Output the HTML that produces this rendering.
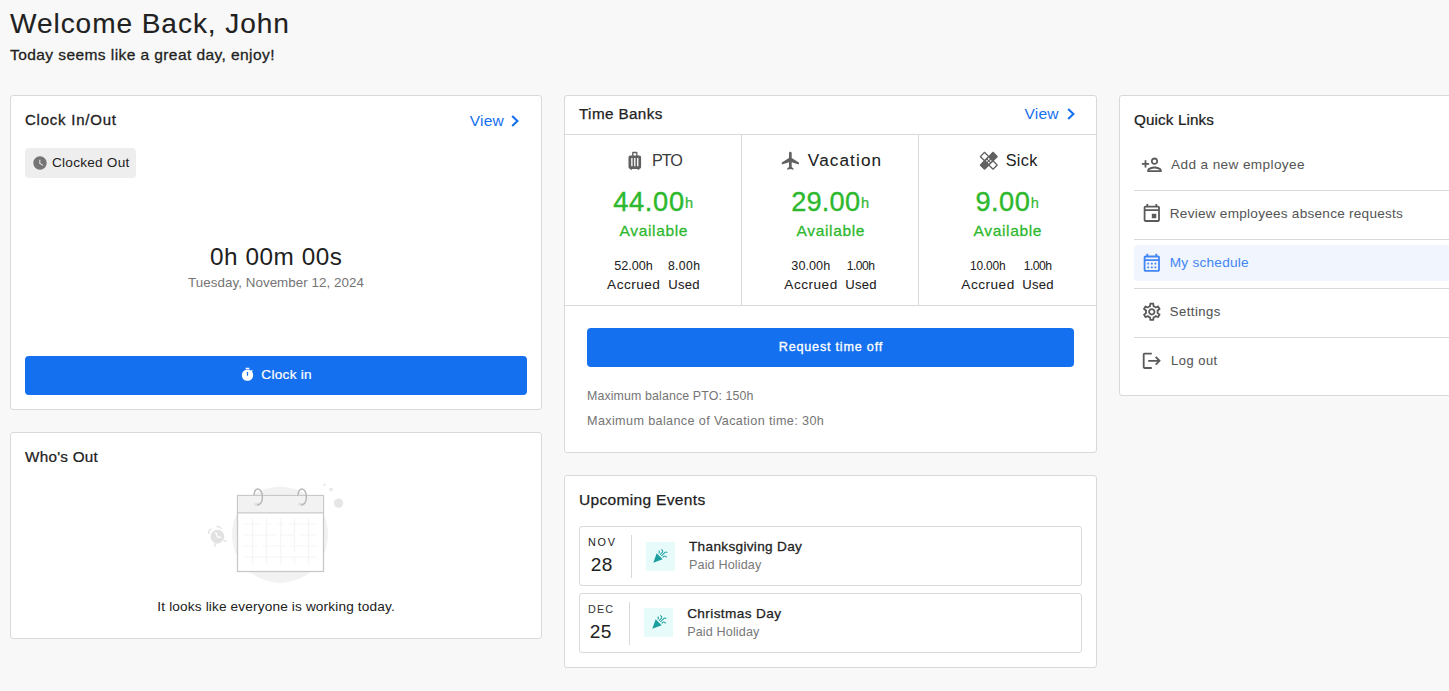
<!DOCTYPE html>
<html lang="en">
<head>
<meta charset="utf-8">
<title>Dashboard</title>
<style>
*{box-sizing:border-box;margin:0;padding:0}
html,body{width:1449px;height:691px;overflow:hidden;background:#f8f8f8}
body{font-family:"Liberation Sans",sans-serif;color:#212121;position:relative;font-size:12.6px}
.t{white-space:nowrap;display:inline-block}
.abs{position:absolute}
.cx{position:absolute;left:0;right:0;text-align:center}
h1{position:absolute;left:10px;top:4px;font-size:27px;font-weight:400;line-height:40px}
.sub{position:absolute;left:10px;top:44px;font-size:14.4px;font-weight:400;line-height:22px}
.card{position:absolute;background:#fff;border:1px solid #d9d9d9;border-radius:3px}
.ct{position:absolute;font-size:14.4px;font-weight:400;line-height:22px}
.view{position:absolute;color:#1570ef;font-size:14.4px;line-height:22px;display:flex;align-items:center}
.view svg{width:10px;height:14px;fill:none;stroke:#1570ef;stroke-width:2.1;margin-left:7px;overflow:visible}
.btn{position:absolute;background:#1570ef;border-radius:4px;color:#fff;font-weight:400;font-size:12.6px;display:flex;align-items:center;justify-content:center;padding-bottom:2px}
#c1{left:10px;top:95px;width:532px;height:315px}
#c2{left:10px;top:432px;width:532px;height:207px}
#c3{left:564px;top:95px;width:533px;height:358px}
#c4{left:564px;top:475px;width:533px;height:193px}
#c5{left:1119px;top:95px;width:533px;height:301px}
.g{color:#757575}
.hl{position:absolute;left:0;right:0;height:1px;background:#d9d9d9}
.vl{position:absolute;width:1px;background:#d9d9d9}
.tb{position:absolute;top:39px;height:170px;width:177px}
.tb .nm{position:absolute;left:0;right:0;top:14px;display:flex;justify-content:center;align-items:center;font-size:16.2px;line-height:24px}
.tb .nm svg{width:21.6px;height:21.6px;fill:#616161;margin-right:6.4px}
.tb .val{position:absolute;left:0;right:0;top:49px;text-align:center;color:#2eb82e;font-size:25.2px;font-weight:400;line-height:38px}
.tb .val small{font-size:13.5px;transform:translateY(-3.4px);margin-left:1px}
.tb .val{white-space:nowrap}
.tb .av{position:absolute;left:0;right:0;top:85px;text-align:center;color:#2eb82e;font-size:14.4px;font-weight:400;line-height:22px}
.tb .au{position:absolute;left:0;right:0;top:122px;display:flex;justify-content:center;font-size:12.6px;line-height:18.5px;text-align:center}
.tb .au div+div{margin-left:8px}
.tb .au .n{font-size:11.7px}
.ev{position:absolute;left:14px;width:503px;height:60px;border:1px solid #d9d9d9;border-radius:3px;display:flex;align-items:center;padding-left:8px}
.ev .d{text-align:center}
.ev .m{font-size:10.8px;letter-spacing:1.8px;line-height:16px;margin-right:-1.8px}
.ev .n{font-size:18px;line-height:27px}
.ev .sep{width:1px;height:43px;background:#d9d9d9;margin:0 14px 0 16px}
.ev .ic{width:29px;height:29px;position:relative;top:0;background:#e8fbfb;display:flex;align-items:center;justify-content:center;margin-right:14px}
.ev .ic svg{width:16px;height:16px;fill:#1a9e9e}
.ev .tt{font-size:12.6px;font-weight:400;line-height:18px}
.ev .st{font-size:11.7px;line-height:18px;color:#757575}
.ql{position:absolute;left:14px;right:0;height:36px;display:flex;align-items:center;padding-left:7px;color:#555;font-size:12.6px}
.ql svg{width:21.6px;height:21.6px;fill:#5a5a5a;margin-right:7.2px}
.ql.on{background:#f0f5fe;color:#4285f4;border-radius:4px 0 0 4px}
.ql.on svg{fill:#4285f4}
</style>
</head>
<body>
<h1><span class="t" style="font-size:28.08px;letter-spacing:0.926px;margin-right:-0.926px;-webkit-text-stroke:0.11px">Welcome Back, John</span></h1>
<div class="sub"><span class="t" style="font-size:15.55px;letter-spacing:0.405px;margin-right:-0.405px;-webkit-text-stroke:0.28px">Today seems like a great day, enjoy!</span></div>

<div class="card" id="c1">
  <div class="ct" style="left:14px;top:13px"><span class="t" style="font-size:14.98px;letter-spacing:0.783px;margin-right:-0.783px;-webkit-text-stroke:0.30px">Clock In/Out</span></div>
  <div class="view" style="right:21px;top:14px"><span class="t" style="font-size:15.55px;letter-spacing:0.193px;margin-right:-0.193px">View</span><svg viewBox="0 0 10 14" style="margin-left:6.200px"><path d="M2.200 2l5.200 5-5.200 5"/></svg></div>
  <div class="abs" style="left:14px;top:52px;height:30px;width:111px;background:#eeeeee;border-radius:4px;display:flex;align-items:center;padding-left:7px;padding-bottom:1px;font-size:12.6px">
    <svg viewBox="0 0 24 24" style="width:16px;height:16px;fill:#757575;margin-right:4px"><path d="M12 2C6.500 2 2 6.500 2 12s4.500 10 10 10 10-4.500 10-10S17.500 2 12 2zm4.200 14.200L11 13V7h1.500v5.200l4.500 2.700-.8 1.300z"/></svg><span class="t" style="font-size:13.61px;letter-spacing:0.236px;margin-right:-0.236px;position:relative;top:-0.50px">Clocked Out</span>
  </div>
  <div class="cx" style="top:144px;font-size:22.5px;line-height:34px"><span class="t" style="font-size:24.30px;letter-spacing:0.559px;margin-right:-0.559px">0h 00m 00s</span></div>
  <div class="cx g" style="top:177px;font-size:12.6px;line-height:19px"><span class="t" style="font-size:13.36px;letter-spacing:0.052px;margin-right:-0.052px;-webkit-text-stroke:0.02px">Tuesday, November 12, 2024</span></div>
  <div class="btn" style="left:14px;top:260px;width:502px;height:39px">
    <svg viewBox="0 0 24 24" style="width:15px;height:15px;fill:#fff;margin-right:6px"><path d="M15 1H9v2h6V1zm4.030 6.390l1.420-1.420c-.43-.51-.9-.99-1.410-1.410l-1.420 1.420C16.070 4.740 14.120 4 12 4c-4.970 0-9 4.030-9 9s4.020 9 9 9 9-4.030 9-9c0-2.120-.74-4.070-1.970-5.610zM13 14h-2V8h2v6z"/></svg><span class="t" style="font-size:13.61px;letter-spacing:0.286px;margin-right:-0.286px;position:relative;top:-0.50px;-webkit-text-stroke:0.21px">Clock in</span>
  </div>
</div>

<div class="card" id="c2">
  <div class="ct" style="left:14px;top:13px"><span class="t" style="font-size:15.26px;letter-spacing:0.258px;margin-right:-0.258px;-webkit-text-stroke:0.24px">Who's Out</span></div>
<svg class="abs" style="left:193px;top:49px" width="144" height="104" viewBox="204 482 144 104">
    <circle cx="280" cy="534.7" r="48" fill="#f2f2f2"/>
    <circle cx="338.600" cy="503.100" r="4.700" fill="#e6e6e6"/>
    <circle cx="331" cy="489.600" r="2" fill="#e9e9e9"/>
    <circle cx="324.500" cy="484.900" r="1.300" fill="#ececec"/>
    <g transform="rotate(-22 217.300 536.400) translate(217.300 536.400) scale(1.1) translate(-217.300 -536.400)" fill="#e2e2e2">
      <circle cx="217.300" cy="536.600" r="6.200"/>
      <path d="M210.500 531.300a4.600 4.600 0 0 1 4.200-3.900l.3 1.200a3.600 3.600 0 0 0-3.400 3.200zM224.100 531.300a4.600 4.600 0 0 0-4.200-3.900l-.3 1.200a3.600 3.600 0 0 1 3.400 3.200zM212.600 541.300l-1.700 2.600 1 .6 1.800-2.500zM222 541.300l1.700 2.600-1 .6-1.800-2.500z"/>
      <path d="M217.300 532.800v4.200l2.600 1.400" stroke="#fff" stroke-width="1.200" fill="none" stroke-linecap="round"/>
    </g>
    <rect x="237.500" y="495.500" width="86" height="76" fill="#fff" stroke="#c8c8c8" stroke-width="1.300"/>
    <rect x="238" y="496" width="85" height="16.500" fill="#f2f2f2"/>
    <path d="M237.500 512.800h86" stroke="#c8c8c8" stroke-width="1.300"/>
    <g stroke="#f5f5f5" stroke-width="1.200">
      <path d="M244 524h17M266 524h6M277 524h7M288 524h29M244 535h32M281 535h14M300 535h17M244 546h13M262 546h23M290 546h27M244 557h73"/>
      <path d="M252.500 518v46M266.500 518v46M280.700 518v46M294.500 518v34M294.500 556v8M308.500 518v46"/>
    </g>
    <ellipse cx="256.500" cy="504.300" rx="2.600" ry="1.600" fill="#e0e0e0"/>
    <ellipse cx="300.500" cy="504.300" rx="2.600" ry="1.600" fill="#e0e0e0"/>
    <path d="M254 494.500c.5-3.500 2.200-5.500 4-5.500 2.500 0 4.400 3.400 4.400 8.300 0 4-1.800 7-4.600 7.600" fill="none" stroke="#b8b8b8" stroke-width="1.500" stroke-linecap="round"/>
    <path d="M298 494.500c.5-3.500 2.200-5.500 4-5.500 2.500 0 4.400 3.400 4.400 8.300 0 4-1.800 7-4.600 7.600" fill="none" stroke="#b8b8b8" stroke-width="1.500" stroke-linecap="round"/>
  </svg>
  <div class="cx" style="top:164px;font-size:12.6px;line-height:19px"><span class="t" style="font-size:13.61px;letter-spacing:0.157px;margin-right:-0.157px">It looks like everyone is working today.</span></div>
</div>

<div class="card" id="c3">
  <div class="ct" style="left:14px;top:7px"><span class="t" style="font-size:15.26px;letter-spacing:0.373px;margin-right:-0.373px;-webkit-text-stroke:0.25px">Time Banks</span></div>
  <div class="view" style="right:20.500px;top:7px"><span class="t" style="font-size:15.55px;letter-spacing:0.193px;margin-right:-0.193px">View</span><svg viewBox="0 0 10 14"><path d="M2.200 2l5.200 5-5.200 5"/></svg></div>
  <div class="hl" style="top:38px"></div>
  <div class="hl" style="top:209px"></div>
  <div class="vl" style="left:176px;top:39px;height:170px"></div>
  <div class="vl" style="left:353px;top:39px;height:170px"></div>
  <div class="tb" style="left:0">
    <div class="nm"><svg viewBox="0 0 24 24"><path d="M17 6h-2V3c0-.55-.45-1-1-1h-4c-.55 0-1 .45-1 1v3H7c-1.100 0-2 .9-2 2v11c0 1.100.9 2 2 2 0 .55.45 1 1 1s1-.45 1-1h6c0 .55.45 1 1 1s1-.45 1-1c1.100 0 2-.9 2-2V8c0-1.100-.9-2-2-2zM9.500 18H8V9h1.500v9zm3.250 0h-1.500V9h1.500v9zm.75-12h-3V3.500h3V6zM16 18h-1.500V9H16v9z"/></svg><span class="t" style="font-size:16.20px;letter-spacing:-1.062px;margin-right:1.062px;position:relative;top:-1.00px;opacity:0.88">PTO</span></div>
    <div class="val"><span class="t" style="font-size:27.22px;letter-spacing:0.711px;margin-right:-0.711px;position:relative;top:-1.00px;-webkit-text-stroke:0.38px">44.00</span><small class="t" style="font-size:14.58px;letter-spacing:0.000px;margin-right:0.656px;position:relative;top:-1.00px;-webkit-text-stroke:0.21px">h</small></div>
    <div class="av"><span class="t" style="font-size:15.55px;letter-spacing:0.633px;margin-right:-0.633px;-webkit-text-stroke:0.27px">Available</span></div>
    <div class="au"><div><span class="t n" style="font-size:12.64px;letter-spacing:0.013px;margin-right:-0.013px;-webkit-text-stroke:0.02px">52.00h</span><br><span class="t" style="font-size:13.61px;letter-spacing:0.487px;margin-right:-0.487px;-webkit-text-stroke:0.06px">Accrued</span></div><div><span class="t n" style="font-size:12.17px;letter-spacing:0.395px;margin-right:-0.395px;-webkit-text-stroke:0.07px">8.00h</span><br><span class="t" style="font-size:13.10px;letter-spacing:0.276px;margin-right:-0.276px;-webkit-text-stroke:0.07px">Used</span></div></div>
  </div>
  <div class="tb" style="left:177px">
    <div class="nm"><svg viewBox="0 0 24 24"><path d="M21 16v-2l-8-5V3.500c0-.83-.67-1.500-1.500-1.500S10 2.670 10 3.500V9l-8 5v2l8-2.500V19l-2 1.500V22l3.500-1 3.500 1v-1.500L13 19v-5.500l8 2.500z"/></svg><span class="t" style="font-size:17.17px;letter-spacing:1.107px;margin-right:-1.107px;position:relative;top:-1.00px;-webkit-text-stroke:0.07px">Vacation</span></div>
    <div class="val"><span class="t" style="font-size:27.22px;letter-spacing:0.191px;margin-right:-0.191px;position:relative;top:-1.00px;-webkit-text-stroke:0.33px">29.00</span><small class="t" style="font-size:14.58px;letter-spacing:0.000px;margin-right:0.656px;position:relative;top:-1.00px;-webkit-text-stroke:0.21px">h</small></div>
    <div class="av"><span class="t" style="font-size:15.55px;letter-spacing:0.633px;margin-right:-0.633px;-webkit-text-stroke:0.27px">Available</span></div>
    <div class="au"><div><span class="t n" style="font-size:12.64px;letter-spacing:0.044px;margin-right:-0.044px;-webkit-text-stroke:0.01px">30.00h</span><br><span class="t" style="font-size:13.61px;letter-spacing:0.487px;margin-right:-0.487px;-webkit-text-stroke:0.06px">Accrued</span></div><div><span class="t n" style="font-size:12.17px;letter-spacing:-0.516px;margin-right:0.516px">1.00h</span><br><span class="t" style="font-size:13.10px;letter-spacing:0.276px;margin-right:-0.276px;-webkit-text-stroke:0.07px">Used</span></div></div>
  </div>
  <div class="tb" style="left:354px">
    <div class="nm"><svg viewBox="0 0 24 24"><path d="M17.730 12.020l3.980-3.980c.39-.39.39-1.020 0-1.410l-4.340-4.340c-.39-.39-1.020-.39-1.410 0l-3.980 3.980L8 2.290C7.800 2.100 7.550 2 7.290 2c-.25 0-.51.1-.7.29L2.250 6.630c-.39.39-.39 1.020 0 1.410l3.980 3.980L2.250 16c-.39.39-.39 1.020 0 1.410l4.340 4.340c.39.39 1.020.39 1.410 0l3.980-3.980 3.980 3.980c.2.2.45.29.71.29.26 0 .51-.1.71-.29l4.340-4.340c.39-.39.39-1.020 0-1.410l-3.990-3.980zM12 9c.55 0 1 .45 1 1s-.45 1-1 1-1-.45-1-1 .45-1 1-1zm-4.710 1.960L3.660 7.340l3.630-3.630 3.620 3.620-3.620 3.630zM10 13c-.55 0-1-.45-1-1s.45-1 1-1 1 .45 1 1-.45 1-1 1zm2 2c-.55 0-1-.45-1-1s.45-1 1-1 1 .45 1 1-.45 1-1 1zm2-4c.55 0 1 .45 1 1s-.45 1-1 1-1-.45-1-1 .45-1 1-1zm2.660 9.340l-3.630-3.620 3.630-3.630 3.620 3.620-3.620 3.630z"/></svg><span class="t" style="font-size:16.20px;letter-spacing:0.354px;margin-right:-0.354px;position:relative;top:-1.00px">Sick</span></div>
    <div class="val"><span class="t" style="font-size:27.22px;letter-spacing:0.458px;margin-right:-0.458px;position:relative;top:-1.00px;-webkit-text-stroke:0.35px">9.00</span><small class="t" style="font-size:14.58px;letter-spacing:0.000px;margin-right:0.656px;position:relative;top:-1.00px;-webkit-text-stroke:0.11px">h</small></div>
    <div class="av"><span class="t" style="font-size:15.55px;letter-spacing:0.633px;margin-right:-0.633px;-webkit-text-stroke:0.27px">Available</span></div>
    <div class="au"><div><span class="t n" style="font-size:11.93px;letter-spacing:-0.153px;margin-right:0.153px;-webkit-text-stroke:0.02px">10.00h</span><br><span class="t" style="font-size:13.61px;letter-spacing:0.487px;margin-right:-0.487px;-webkit-text-stroke:0.06px">Accrued</span></div><div><span class="t n" style="font-size:12.17px;letter-spacing:-0.516px;margin-right:0.516px">1.00h</span><br><span class="t" style="font-size:13.10px;letter-spacing:0.276px;margin-right:-0.276px;-webkit-text-stroke:0.07px">Used</span></div></div>
  </div>
  <div class="btn" style="left:22px;top:232px;width:487px;height:39px"><span class="t" style="font-size:12.60px;letter-spacing:0.797px;margin-right:-0.797px;-webkit-text-stroke:0.32px">Request time off</span></div>
  <div class="abs g" style="left:22px;top:291px;font-size:11.7px;line-height:18px"><span class="t" style="font-size:12.40px;letter-spacing:0.114px;margin-right:-0.114px">Maximum balance PTO: 150h</span></div>
  <div class="abs g" style="left:22px;top:316px;font-size:11.7px;line-height:18px"><span class="t" style="font-size:12.64px;letter-spacing:0.366px;margin-right:-0.366px;-webkit-text-stroke:0.02px">Maximum balance of Vacation time: 30h</span></div>
</div>

<div class="card" id="c4">
  <div class="ct" style="left:14px;top:13px"><span class="t" style="font-size:15.55px;letter-spacing:0.310px;margin-right:-0.310px;-webkit-text-stroke:0.25px">Upcoming Events</span></div>
  <div class="ev" style="top:50px">
    <div class="d"><div class="m"><span class="t" style="font-size:10.80px;letter-spacing:1.792px;margin-right:0.008px;position:relative;top:-0.50px">NOV</span></div><div class="n"><span class="t" style="font-size:19.08px;letter-spacing:0.484px;margin-right:-0.484px;position:relative;top:0.50px">28</span></div></div>
    <div class="sep"></div>
    <div class="ic"><svg viewBox="0 0 24 24"><path d="M2 22l14-5-9-9zM14.530 12.530l5.590-5.590c.49-.49 1.280-.49 1.770 0l.59.59 1.060-1.060-.59-.59c-1.070-1.070-2.820-1.070-3.890 0l-5.590 5.590 1.060 1.060zM10.060 6.880l-.59.59 1.060 1.060.59-.59c1.070-1.070 1.070-2.820 0-3.890l-.59-.59-1.060 1.070.59.59c.48.48.48 1.280 0 1.760zM17.060 11.880l-1.590 1.590 1.060 1.060 1.590-1.590c.49-.49 1.280-.49 1.770 0l1.610 1.610 1.060-1.060-1.610-1.610c-1.080-1.070-2.820-1.070-3.890 0zM15.060 5.880l-3.590 3.590 1.060 1.060 3.590-3.590c1.070-1.070 1.070-2.820 0-3.890l-1.590-1.590-1.060 1.060 1.590 1.590c.48.49.48 1.290 0 1.770z"/></svg></div>
    <div><div class="tt"><span class="t" style="font-size:13.61px;letter-spacing:0.317px;margin-right:-0.317px;-webkit-text-stroke:0.26px">Thanksgiving Day</span></div><div class="st"><span class="t" style="font-size:12.64px;letter-spacing:0.125px;margin-right:-0.125px;opacity:0.97">Paid Holiday</span></div></div>
  </div>
  <div class="ev" style="top:117px">
    <div class="d"><div class="m"><span class="t" style="font-size:10.80px;letter-spacing:1.159px;margin-right:0.641px;position:relative;top:-0.50px;opacity:0.91">DEC</span></div><div class="n"><span class="t" style="font-size:19.08px;letter-spacing:0.422px;margin-right:-0.422px;position:relative;top:0.50px;-webkit-text-stroke:0.02px">25</span></div></div>
    <div class="sep"></div>
    <div class="ic" style="top:-1px"><svg viewBox="0 0 24 24"><path d="M2 22l14-5-9-9zM14.530 12.530l5.590-5.590c.49-.49 1.280-.49 1.770 0l.59.59 1.060-1.060-.59-.59c-1.070-1.070-2.820-1.070-3.890 0l-5.590 5.590 1.060 1.060zM10.060 6.880l-.59.59 1.060 1.060.59-.59c1.070-1.070 1.070-2.820 0-3.890l-.59-.59-1.060 1.070.59.59c.48.48.48 1.280 0 1.760zM17.060 11.880l-1.590 1.590 1.060 1.060 1.590-1.590c.49-.49 1.280-.49 1.770 0l1.610 1.610 1.060-1.060-1.610-1.610c-1.080-1.070-2.820-1.070-3.890 0zM15.060 5.880l-3.590 3.590 1.060 1.060 3.590-3.590c1.070-1.070 1.070-2.820 0-3.890l-1.590-1.590-1.060 1.060 1.590 1.590c.48.49.48 1.290 0 1.770z"/></svg></div>
    <div><div class="tt"><span class="t" style="font-size:13.61px;letter-spacing:0.389px;margin-right:-0.389px;-webkit-text-stroke:0.25px">Christmas Day</span></div><div class="st"><span class="t" style="font-size:12.64px;letter-spacing:0.125px;margin-right:-0.125px;opacity:0.97">Paid Holiday</span></div></div>
  </div>
</div>

<div class="card" id="c5">
  <div class="ct" style="left:14px;top:13px"><span class="t" style="font-size:15.26px;letter-spacing:0.117px;margin-right:-0.117px;-webkit-text-stroke:0.23px">Quick Links</span></div>
  <div class="ql" style="top:51px"><svg viewBox="0 0 24 24"><path d="M15 12c2.210 0 4-1.790 4-4s-1.790-4-4-4-4 1.790-4 4 1.790 4 4 4zm0-6c1.100 0 2 .9 2 2s-.9 2-2 2-2-.9-2-2 .9-2 2-2zm0 8c-2.670 0-8 1.340-8 4v2h16v-2c0-2.660-5.330-4-8-4zm-6 4c.22-.72 3.310-2 6-2 2.700 0 5.800 1.290 6 2H9zm-3-3v-3h3v-2H6V7H4v3H1v2h3v3z"/></svg><i style="width:1.300px"></i><span class="t" style="font-size:13.61px;letter-spacing:0.374px;margin-right:-0.374px;position:relative;top:-0.50px;-webkit-text-stroke:0.03px">Add a new employee</span></div>
  <div class="hl" style="left:14px;top:94px"></div>
  <div class="ql" style="top:100px"><svg viewBox="0 0 24 24"><path d="M19 3h-1V1h-2v2H8V1H6v2H5c-1.110 0-1.990.9-1.990 2L3 19c0 1.100.89 2 2 2h14c1.100 0 2-.9 2-2V5c0-1.100-.9-2-2-2zm0 16H5V9h14v10zm0-12H5V5h14v2zm-2 5h-5v5h5v-5z"/></svg><span class="t" style="font-size:13.61px;letter-spacing:0.240px;margin-right:-0.240px;position:relative;top:-0.50px;-webkit-text-stroke:0.03px">Review employees absence requests</span></div>
  <div class="hl" style="left:14px;top:143px"></div>
  <div class="ql on" style="top:149px"><svg viewBox="0 0 24 24"><path d="M19 4h-1V2h-2v2H8V2H6v2H5c-1.110 0-1.990.9-1.990 2L3 20c0 1.100.89 2 2 2h14c1.100 0 2-.9 2-2V6c0-1.100-.9-2-2-2zm0 16H5V10h14v10zm0-12H5V6h14v2zM9 14H7v-2h2v2zm4 0h-2v-2h2v2zm4 0h-2v-2h2v2zm-8 4H7v-2h2v2zm4 0h-2v-2h2v2zm4 0h-2v-2h2v2z"/></svg><span class="t" style="font-size:13.61px;letter-spacing:0.247px;margin-right:-0.247px;position:relative;top:-0.50px">My schedule</span></div>
  <div class="hl" style="left:14px;top:192px"></div>
  <div class="ql" style="top:198px"><svg viewBox="0 0 24 24"><path d="M19.430 12.980c.04-.32.07-.64.07-.98 0-.34-.03-.66-.07-.98l2.110-1.650c.19-.15.24-.42.12-.64l-2-3.460c-.09-.16-.26-.25-.44-.25-.06 0-.12.010-.17.030l-2.490 1c-.52-.4-1.080-.73-1.690-.98l-.38-2.650C14.460 2.180 14.250 2 14 2h-4c-.25 0-.46.18-.49.42l-.38 2.650c-.61.25-1.170.59-1.690.98l-2.490-1c-.06-.02-.12-.03-.18-.03-.17 0-.34.09-.43.25l-2 3.460c-.13.22-.07.49.12.64l2.110 1.650c-.04.32-.07.65-.07.980 0 .33.03.66.07.98l-2.110 1.650c-.19.15-.24.42-.12.64l2 3.460c.09.16.26.25.44.25.06 0 .12-.010.17-.030l2.490-1c.52.4 1.080.73 1.690.98l.38 2.650c.03.24.24.42.49.42h4c.25 0 .46-.18.49-.42l.38-2.650c.61-.25 1.170-.59 1.690-.98l2.490 1c.06.020.12.030.18.030.17 0 .34-.09.43-.25l2-3.460c.12-.22.07-.49-.12-.64l-2.110-1.650zm-1.980-1.710c.04.31.05.52.05.73 0 .21-.02.43-.05.73l-.14 1.130.89.7 1.080.84-.7 1.210-1.270-.51-1.040-.42-.9.68c-.43.32-.84.56-1.250.73l-1.060.43-.16 1.130-.2 1.350h-1.400l-.19-1.350-.16-1.130-1.060-.43c-.43-.18-.83-.41-1.230-.71l-.91-.7-1.060.43-1.270.51-.7-1.210 1.080-.84.89-.7-.14-1.130c-.03-.31-.05-.54-.05-.74s.02-.43.05-.73l.14-1.130-.89-.7-1.080-.84.7-1.210 1.270.51 1.040.42.9-.68c.43-.32.84-.56 1.250-.73l1.060-.43.16-1.130.2-1.350h1.390l.19 1.350.16 1.130 1.060.43c.43.18.83.41 1.230.71l.91.7 1.060-.43 1.270-.51.7 1.210-1.070.85-.89.7.14 1.130zM12 8c-2.210 0-4 1.790-4 4s1.790 4 4 4 4-1.790 4-4-1.790-4-4-4zm0 6c-1.100 0-2-.9-2-2s.9-2 2-2 2 .9 2 2-.9 2-2 2z"/></svg><span class="t" style="font-size:13.10px;letter-spacing:0.473px;margin-right:-0.473px;position:relative;top:-0.50px;-webkit-text-stroke:0.10px">Settings</span></div>
  <div class="hl" style="left:14px;top:241px"></div>
  <div class="ql" style="top:247px"><svg viewBox="0 0 24 24"><path d="M17 7l-1.410 1.410L18.170 11H8v2h10.170l-2.580 2.580L17 17l5-5zM4 5h8V3H4c-1.100 0-2 .9-2 2v14c0 1.100.9 2 2 2h8v-2H4V5z"/></svg><i style="width:1.300px"></i><span class="t" style="font-size:12.85px;letter-spacing:0.539px;margin-right:-0.539px;position:relative;top:-0.50px;-webkit-text-stroke:0.09px">Log out</span></div>
</div>
</body>
</html>
